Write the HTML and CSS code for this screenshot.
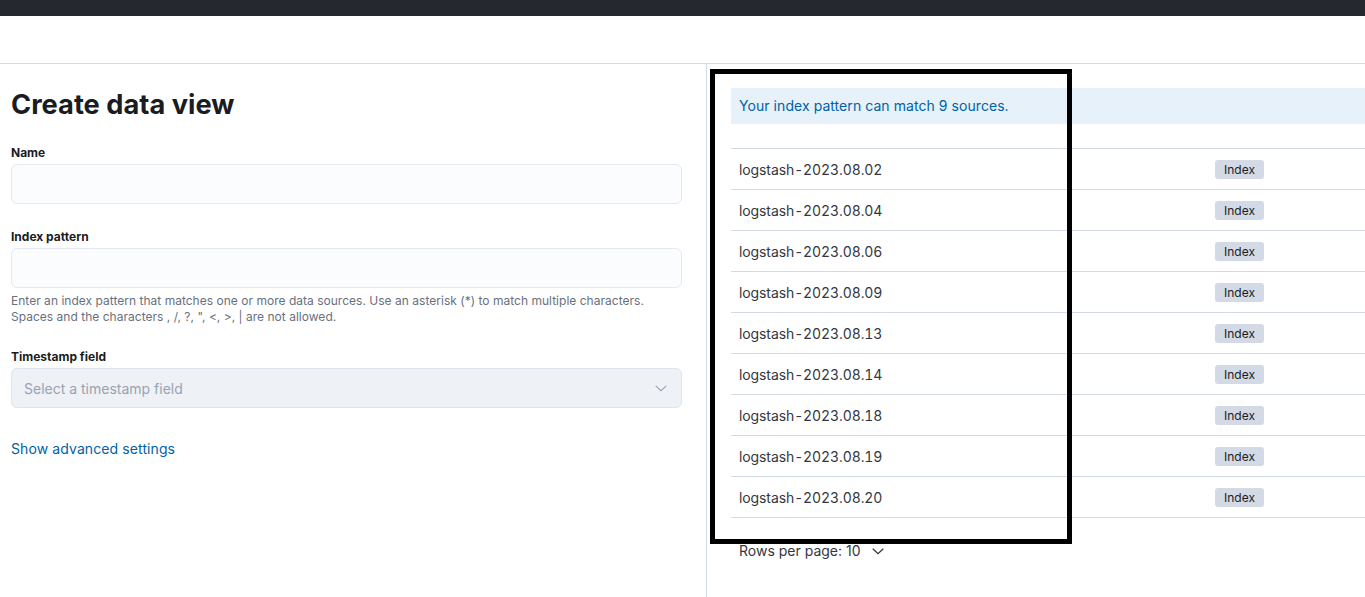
FILE: index.html
```html
<!DOCTYPE html>
<html>
<head>
<meta charset="utf-8">
<link rel="stylesheet" href="styles.css">
</head>
<body>
<div class="topbar"></div>
<div class="header"></div>
<div class="main">
  <section class="left">
    <h1 class="title">Create data view</h1>
    <div class="field">
      <label class="label">Name</label>
      <div class="input"></div>
    </div>
    <div class="field has-help">
      <label class="label">Index pattern</label>
      <div class="input"></div>
      <div class="help">Enter an index pattern that matches one or more data sources. Use an asterisk (*) to match multiple characters.<br>Spaces and the characters , /, ?, ", &lt;, &gt;, | are not allowed.</div>
    </div>
    <div class="field">
      <label class="label">Timestamp field</label>
      <div class="select">
        <span class="placeholder">Select a timestamp field</span>
        <svg class="chev" width="14" height="14" viewBox="0 0 16 16"><path d="M2 5.5l6 5.5 6-5.5" fill="none" stroke="#98a2b3" stroke-width="1.3"/></svg>
      </div>
    </div>
    <a class="link">Show advanced settings</a>
  </section>
  <section class="right">
    <div class="callout">Your index pattern can match 9 sources.</div>
    <div class="table">
      <div class="row"><span class="name">logstash-2023.08.02</span><span class="badge">Index</span></div>
      <div class="row"><span class="name">logstash-2023.08.04</span><span class="badge">Index</span></div>
      <div class="row"><span class="name">logstash-2023.08.06</span><span class="badge">Index</span></div>
      <div class="row"><span class="name">logstash-2023.08.09</span><span class="badge">Index</span></div>
      <div class="row"><span class="name">logstash-2023.08.13</span><span class="badge">Index</span></div>
      <div class="row"><span class="name">logstash-2023.08.14</span><span class="badge">Index</span></div>
      <div class="row"><span class="name">logstash-2023.08.18</span><span class="badge">Index</span></div>
      <div class="row"><span class="name">logstash-2023.08.19</span><span class="badge">Index</span></div>
      <div class="row"><span class="name">logstash-2023.08.20</span><span class="badge">Index</span></div>
    </div>
    <div class="pager">Rows per page: 10
      <svg class="pchev" width="14" height="14" viewBox="0 0 16 16"><path d="M2 5.5l6 5.5 6-5.5" fill="none" stroke="#343741" stroke-width="1.5"/></svg>
    </div>
    <div class="highlight"></div>
  </section>
</div>
</body>
</html>
```

FILE: styles.css
```css
* { box-sizing: border-box; }
html, body { margin: 0; padding: 0; }
body {
  font-family: Inter, "Noto Sans", sans-serif;
  background: #fff;
  color: #343741;
  width: 1365px;
  height: 597px;
  overflow: hidden;
}
.topbar { height: 16px; background: #25282f; }
.header { height: 48px; background: #fff; border-bottom: 1px solid #d3dae6; }
.main { display: flex; height: 533px; }
.left {
  width: 707px;
  flex: none;
  border-right: 1px solid #d3dae6;
  padding: 21px 24px 0 11px;
}
.title {
  margin: 0 0 18px;
  font-size: 27.25px;
  line-height: 40px;
  font-weight: 700;
  color: #1a1c21;
}
.field { margin-bottom: 23px; }
.field.has-help { margin-bottom: 22px; }
.label {
  display: block;
  font-size: 12px;
  line-height: 18px;
  font-weight: 700;
  color: #1a1c21;
  padding-top: 1px;
  margin-bottom: 2px;
}
.input {
  height: 40px;
  background: #fbfcfd;
  border: 1px solid #e4e8f0;
  border-radius: 6px;
}
.help {
  padding-top: 5px;
  font-size: 12px;
  line-height: 16px;
  color: #69707d;
  letter-spacing: 0.02px;
}
.select {
  height: 40px;
  background: #eef2f7;
  border: 1px solid #dfe5ee;
  border-radius: 6px;
  display: flex;
  align-items: center;
  justify-content: space-between;
  padding: 0 13px 0 12px;
}
.placeholder { font-size: 14px; color: #98a2b3; }
.link {
  display: block;
  padding-top: 8px;
  font-size: 14px;
  line-height: 20px;
  color: #0061a6;
  letter-spacing: 0.1px;
}
.right {
  position: relative;
  flex: 1;
  padding: 24px 0 0 24px;
  overflow: hidden;
}
.callout {
  background: #e6f1fa;
  color: #0061a6;
  font-size: 14px;
  line-height: 20px;
  padding: 8px 8px;
  margin-bottom: 24px;
  letter-spacing: 0.06px;
}
.table { border-top: 1px solid #d3dae6; width: 700px; }
.row {
  display: flex;
  align-items: center;
  height: 41px;
  border-bottom: 1px solid #d3dae6;
  font-size: 14px;
  font-variant-numeric: tabular-nums;
}
.name { width: 484px; padding-left: 8px; color: #343741; letter-spacing: -0.1px; }
.badge {
  background: #d3dae6;
  color: #1a1c21;
  font-size: 12px;
  line-height: 19px;
  width: 49px;
  text-align: center;
  border-radius: 3px;
  font-variant-numeric: normal;
}
.pager {
  display: flex;
  align-items: center;
  gap: 10px;
  padding: 23px 0 0 8px;
  font-size: 14px;
  line-height: 20px;
  color: #343741;
}
.highlight {
  position: absolute;
  left: 3px;
  top: 5px;
  width: 362px;
  height: 475px;
  border: 5px solid #000;
}
```
